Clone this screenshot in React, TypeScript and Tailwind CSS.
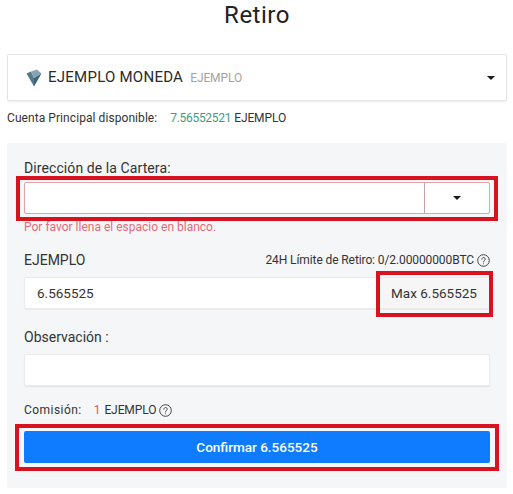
function Caret() {
  return <span className="block w-0 h-0 border-x-[4px] border-x-transparent border-t-[4px] border-t-[#1a1a1a]" />;
}

function HelpIcon() {
  return (
    <svg width="13" height="13" viewBox="0 0 13 13" fill="none" stroke="#444" strokeWidth="1" className="shrink-0">
      <circle cx="6.5" cy="6.5" r="5.8" />
      <path d="M4.8 5.2a1.7 1.7 0 1 1 2.6 1.4c-.6.4-.9.7-.9 1.4" strokeLinecap="round" />
      <circle cx="6.5" cy="9.7" r=".5" fill="#444" stroke="none" />
    </svg>
  );
}

function CoinLogo() {
  return (
    <svg width="16" height="18" viewBox="0 0 16 18">
      <path d="M0.5 4.5 L5 2.5 L8 9 L8 17.5 Z" fill="#56788c" />
      <path d="M5 2.5 L11 0.5 L15.5 4.5 L8 9 Z" fill="#86a5b5" />
      <path d="M15.5 4.5 L8 17.5 L8 9 Z" fill="#3f6479" />
    </svg>
  );
}

export default function App() {
  return (
    <div className="w-[513px] h-[494px] overflow-hidden bg-white pl-[7px] pr-[6px] font-['Roboto',sans-serif] text-[#2a2a2a]">
      <h1 className="h-[54px] pt-[1px] text-center text-[24px] leading-[28px] tracking-[0.5px] text-[#222]">Retiro</h1>

      <div className="h-[47px] flex items-center justify-between pl-[18px] pr-[11px] border border-[#e6e6e6] rounded-[2px] shadow-[0_1px_2px_rgba(0,0,0,0.08)]">
        <div className="flex items-center">
          <CoinLogo />
          <span className="ml-[6px] text-[15px] tracking-[0.25px] text-[#2a2a2a]">EJEMPLO MONEDA</span>
          <span className="ml-[7px] text-[12px] tracking-[-0.1px] text-[#a3a3a3]">EJEMPLO</span>
        </div>
        <Caret />
      </div>

      <div className="h-[42px] pt-[9px] text-[12px] leading-[17px] text-[#333]">
        <span className="tracking-[0.07px]">Cuenta Principal disponible:</span>
        <span className="ml-[13px] tracking-[-0.3px] text-[#3d9c84]">7.56552521</span>
        <span className="ml-[3px] tracking-[-0.1px]">EJEMPLO</span>
      </div>

      <div className="h-[345px] bg-[#f4f6f8] rounded-[2px] px-[17px] pt-[16px]">
        <div className="text-[14px] leading-[18px] tracking-[0.09px] text-[#333]">Dirección de la Cartera:</div>

        <div className="relative mt-[5px] h-[32px] flex bg-white border border-[#e5a0a8] rounded-[2px]">
          <div className="flex-1" />
          <div className="w-[65px] flex items-center justify-center border-l border-[#c9a0a4]">
            <Caret />
          </div>
          <div className="absolute -left-[9px] -right-[9px] -top-[7px] -bottom-[8px] border-[4px] border-[#d8121f]" />
        </div>

        <div className="mt-[5px] text-[12px] leading-[16px] text-[#e86a7a]">Por favor llena el espacio en blanco.</div>

        <div className="mt-[16px] flex items-center justify-between">
          <span className="text-[14px] leading-[18px] text-[#333]">EJEMPLO</span>
          <span className="flex items-center gap-[3px] text-[12px] leading-[16px] tracking-[-0.1px] text-[#333]">
            24H Límite de Retiro: 0/2.00000000BTC <HelpIcon />
          </span>
        </div>

        <div className="relative mt-[8px] h-[32px] flex items-center justify-between bg-white border border-[#ececec] rounded-[2px] shadow-[0_1px_1px_rgba(0,0,0,0.05)] pl-[12px]">
          <span className="text-[13.5px] text-[#333]">6.565525</span>
          <span className="w-[110px] h-full flex items-center justify-center bg-[#f6f6f6] text-[13.5px] text-[#333]">Max 6.565525</span>
          <div className="absolute -right-[4px] -top-[7px] -bottom-[9px] w-[117px] border-[4px] border-[#d8121f]" />
        </div>

        <div className="mt-[19px] text-[14px] leading-[18px] text-[#333]">Observación :</div>

        <div className="mt-[8px] h-[32px] bg-white border border-[#ececec] rounded-[2px] shadow-[0_1px_1px_rgba(0,0,0,0.08)]" />

        <div className="mt-[16px] flex items-center text-[12px] leading-[16px] text-[#333]">
          <span className="tracking-[0.45px]">Comisión:</span>
          <span className="ml-[12px] text-[#e0525f]">1</span>
          <span className="ml-[4px] tracking-[-0.1px]">EJEMPLO</span>
          <span className="ml-[3px]"><HelpIcon /></span>
        </div>

        <div className="relative mt-[13px] h-[32px] flex items-center justify-center bg-[#0f7bff] rounded-[2px] text-[13.5px] font-medium text-white">
          Confirmar 6.565525
          <div className="absolute -left-[9px] -right-[9px] -top-[7px] -bottom-[8px] border-[4px] border-[#d8121f]" />
        </div>
      </div>
    </div>
  );
}
